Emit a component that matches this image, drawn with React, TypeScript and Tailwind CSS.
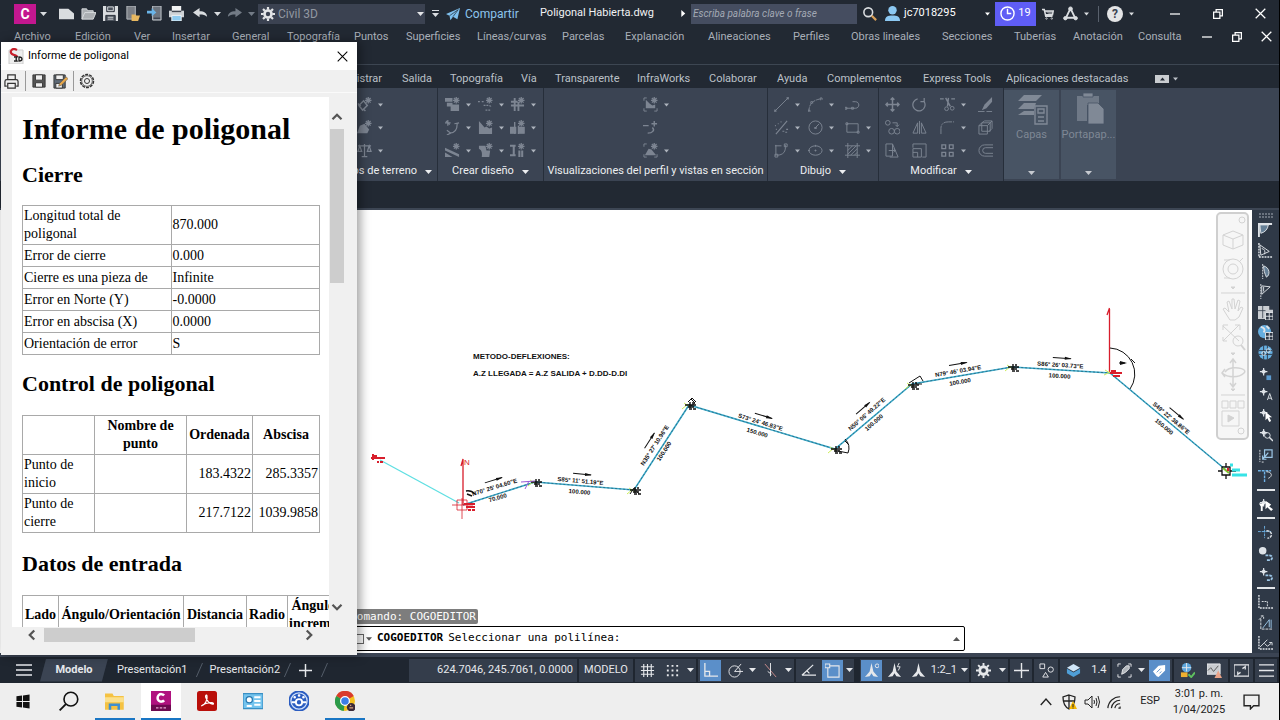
import type { ReactNode } from 'react';

interface IconProps {
  size?: number;
  className?: string;
  children: ReactNode;
}

const Icon = ({ size = 16, className = '', children }: IconProps) => (
  <svg
    width={size}
    height={size}
    viewBox="0 0 16 16"
    fill="none"
    stroke="currentColor"
    strokeWidth="1"
    aria-hidden="true"
    className={`shrink-0 ${className}`}
  >
    {children}
  </svg>
);

const Caret = ({ className = '' }: { className?: string }) => (
  <svg width="7" height="4" viewBox="0 0 7 4" fill="currentColor" aria-hidden="true" className={`shrink-0 ${className}`}>
    <path d="M0 0h7L3.500 4z" />
  </svg>
);

const star = <path d="M12 0v7M8.500 3.500h7M9.500 1l5 5M14.500 1l-5 5" strokeWidth="1.400" />;

/* ---------- title bar ---------- */

const quickTools: { label: string; icon: ReactNode }[] = [
  { label: 'Nuevo', icon: <path d="M0 3h10l6 5v6H0z" fill="#d9dcdf" stroke="none" /> },
  {
    label: 'Abrir',
    icon: <path d="M1 14V3h5l1 2h6v2M1 14l3-7h12l-3 7z" fill="#d9dcdf" fillOpacity=".75" stroke="#d9dcdf" />,
  },
  {
    label: 'Guardar',
    icon: (
      <>
        <path d="M0 0h16v16H0z" fill="#d9dcdf" stroke="none" />
        <path d="M4 0v6h8V0M3 16v-6h10v6" fill="#4b525c" stroke="#222933" />
        <path d="M5 1h6v4H5zM5 12h6M5 14h6" stroke="#d9dcdf" />
      </>
    ),
  },
  {
    label: 'Abrir desde web y móvil',
    icon: (
      <>
        <path d="M2 0h9v14H2z" fill="#7b7f86" stroke="#b9bdc2" />
        <path d="M7 9h4l1 1h4l-2 6H7z" fill="#e8b860" stroke="none" />
      </>
    ),
  },
  {
    label: 'Guardar en web y móvil',
    icon: (
      <>
        <path d="M6 0h9v15H6z" fill="#6e757f" stroke="#c5c9ce" />
        <path d="M7 13h7" stroke="#222933" />
        <path d="M0 5h5V2l5 5-5 4V8H0z" fill="#6ab4e8" stroke="none" />
      </>
    ),
  },
  {
    label: 'Trazar',
    icon: (
      <>
        <path d="M3 0h10v5H3z" fill="#f2f3f4" stroke="none" />
        <path d="M0 5h16v7H0z" fill="#cfd3d7" stroke="none" />
        <path d="M3 6h10" stroke="#222933" />
        <path d="M3 10h10v6H3z" fill="#8fcbf0" stroke="#f2f3f4" />
      </>
    ),
  },
];

const WindowButtons = ({ small = false }: { small?: boolean }) => (
  <div className={`flex items-center justify-between text-white ${small ? 'w-[70px]' : 'w-[96px]'}`}>
    <button aria-label="Minimizar"><Icon size={10}><path d="M0 8h16" strokeWidth="2" /></Icon></button>
    <button aria-label="Restaurar">
      <Icon size={10}><path d="M1 5h10v10H1zM5 4V1h10v10h-3" strokeWidth="2" /></Icon>
    </button>
    <button aria-label="Cerrar"><Icon size={11}><path d="M1 1l14 14M15 1L1 15" strokeWidth="1.800" /></Icon></button>
  </div>
);

const TitleBar = () => (
  <div className="flex h-[27px] shrink-0 items-center pr-[13px] pl-[14px] text-[#d9dcdf]">
    <button aria-label="Menú de aplicación" className="flex w-[41px] items-center gap-[4px]">
      <span className="flex h-[20px] w-[22px] items-center justify-center bg-[#c3178f] text-sm leading-none font-bold text-white">C</span>
      <Caret />
    </button>
    {quickTools.map((tool) => (
      <button key={tool.label} aria-label={tool.label} className="flex w-[22px] justify-center">
        <Icon size={15}>{tool.icon}</Icon>
      </button>
    ))}
    <button aria-label="Deshacer" className="flex w-[34px] items-center gap-[6px] pl-[6px]">
      <Icon size={15}><path d="M0 7l7-5v3.500c5 0 8 2 8 6-2-2-4-2.500-8-2.500v3z" fill="currentColor" stroke="none" /></Icon>
      <Caret />
    </button>
    <button aria-label="Rehacer" className="flex w-[37px] items-center gap-[6px] pl-[6px] text-[#737b86]">
      <Icon size={15}><path d="M16 7L9 2v3.500c-5 0-8 2-8 6 2-2 4-2.500 8-2.500v3z" fill="currentColor" stroke="none" /></Icon>
      <Caret />
    </button>
    <button className="flex h-[20px] w-[167px] items-center gap-[3px] bg-[#3b4251] pr-[1px] pl-[3px] text-xs text-[#9298a1]">
      <Icon size={14} className="text-[#e3e5e7]">
        <circle cx="8" cy="8" r="4" strokeWidth="3" />
        <path d="M8 0v3M8 13v3M0 8h3M13 8h3M2.300 2.300l2 2M11.700 11.700l2 2M13.700 2.300l-2 2M2.300 13.700l2-2" strokeWidth="2.500" />
      </Icon>
      Civil 3D
      <Caret className="ml-auto text-[#e3e5e7]" />
    </button>
    <button aria-label="Personalizar" className="flex w-[21px] flex-col items-center gap-[2px]">
      <span className="h-px w-[7px] bg-current" />
      <Caret />
    </button>
    <button className="flex w-[94px] items-center gap-[5px] text-xs text-[#8cc4ec]">
      <Icon size={14}><path d="M0 8L16 1l-3 13-5-3-3 4-1-5z" fill="#7fc0ee" stroke="none" /><path d="M4 10l10-7-6 8" stroke="#222933" strokeWidth=".8" /></Icon>
      Compartir
    </button>
    <span className="w-[140px] text-[11px] whitespace-nowrap text-[#f1f2f3]">Poligonal Habierta.dwg</span>
    <Icon size={7} className="mr-[4px] text-white"><path d="M3 0l9 8-9 8z" fill="currentColor" stroke="none" /></Icon>
    <input
      aria-label="Buscar"
      placeholder="Escriba palabra clave o frase"
      className="h-[20px] min-w-[100px] flex-1 bg-[#454d60] px-[2px] text-[10px] italic placeholder:text-[#a3a9b4]"
    />
    <button aria-label="Buscar" className="ml-[6px]">
      <Icon size={14}><circle cx="6" cy="6" r="5" strokeWidth="1.800" /><path d="M10 10l5 5" stroke="#d8a05a" strokeWidth="2.500" /></Icon>
    </button>
    <button className="ml-[8px] flex w-[105px] items-center gap-[4px] text-[11px] text-white">
      <Icon size={15} className="text-[#8cc8f2]">
        <circle cx="8" cy="4.500" r="4.500" fill="currentColor" stroke="none" />
        <path d="M0 16c0-5 3-6 8-6s8 1 8 6z" fill="currentColor" stroke="none" />
      </Icon>
      jc7018295
      <Caret className="ml-auto w-[5px]" />
    </button>
    <button className="ml-[5px] flex h-[24px] w-[41px] items-center justify-center gap-[3px] bg-[#5f5df5] text-[11px] text-white">
      <Icon size={15}><circle cx="8" cy="8" r="7" strokeWidth="1.500" /><path d="M8 3v5h4" strokeWidth="1.500" /></Icon>
      19
    </button>
    <button aria-label="Tienda" className="ml-[6px]">
      <Icon size={12}><path d="M0 2h3l2 9h9M4 4h11l-1 5H5" strokeWidth="2" fill="currentColor" fillOpacity=".5" /><circle cx="6" cy="14" r="1" /><circle cx="13" cy="14" r="1" /></Icon>
    </button>
    <button aria-label="Autodesk" className="ml-[9px] flex items-center gap-[6px]">
      <Icon size={15}><path d="M8 2.500L3 13M8 2.500L13 13M3 12.500h9" strokeWidth="2" /><circle cx="8" cy="3" r="2" fill="currentColor" /><circle cx="2.500" cy="13" r="1.800" fill="currentColor" /><circle cx="13.500" cy="13" r="1.800" fill="currentColor" /></Icon>
      <Caret className="w-[5px]" />
    </button>
    <span className="mr-[8px] ml-[9px] h-[16px] w-px bg-[#59616d]" />
    <button aria-label="Ayuda" className="flex items-center gap-[6px]">
      <span className="flex h-[16px] w-[16px] items-center justify-center rounded-full bg-[#e4e5e6] text-xs font-bold text-[#3b4251]">?</span>
      <Caret className="w-[5px]" />
    </button>
    <div className="ml-[36px]"><WindowButtons /></div>
  </div>
);

/* ---------- menu bar and ribbon tabs ---------- */

const menus = [
  'Archivo', 'Edición', 'Ver', 'Insertar', 'General', 'Topografía', 'Puntos', 'Superficies', 'Líneas/curvas',
  'Parcelas', 'Explanación', 'Alineaciones', 'Perfiles', 'Obras lineales', 'Secciones', 'Tuberías', 'Anotación', 'Consulta',
];

const ribbonTabs = [
  'Administrar', 'Salida', 'Topografía', 'Vía', 'Transparente', 'InfraWorks', 'Colaborar', 'Ayuda',
  'Complementos', 'Express Tools', 'Aplicaciones destacadas',
];

const MenuBar = () => (
  <nav className="flex h-[38px] shrink-0 items-start border-b border-[#3d4652] pr-[7px] pl-[14px] text-[11px] leading-[19px] text-[#a9afb8]">
    <div className="grid flex-1 grid-cols-[61fr_59fr_38fr_60fr_55fr_67fr_52fr_71fr_85fr_63fr_83fr_85fr_58fr_91fr_72fr_59fr_65fr_64fr]">
      {menus.map((menu) => (
        <button key={menu} className="text-left whitespace-nowrap">{menu}</button>
      ))}
    </div>
    <div className="flex h-[19px] items-center"><WindowButtons small /></div>
  </nav>
);

const RibbonTabs = () => (
  <div className="grid h-[23px] shrink-0 grid-cols-[77fr_48fr_71fr_34fr_82fr_72fr_68fr_50fr_96fr_83fr_149fr_124fr] items-center pt-[5px] pl-[325px] text-[11px] leading-[18px] text-[#bcc1c8]">
    {ribbonTabs.map((tab) => (
      <button key={tab} className="text-left whitespace-nowrap">{tab}</button>
    ))}
    <button aria-label="Minimizar cinta" className="flex items-center gap-[4px]">
      <span className="flex h-[8px] w-[14px] items-center justify-center bg-[#c9ccd0] text-[#222933]"><Caret className="w-[5px] rotate-180" /></span>
      <Caret className="w-[5px]" />
    </button>
  </div>
);

/* ---------- ribbon ---------- */

interface Tool {
  name: string;
  icon: ReactNode;
  menu?: boolean;
}

const landTools: Tool[] = [
  { name: 'Parcela', menu: true, icon: <>{star}<path d="M2 9l5-5 4 5-5 5zM1 7l3 3M7 13l2 2" strokeWidth="1.600" /></> },
  { name: 'Superficies', menu: true, icon: <>{star}<path d="M0 14l3-8 5-2 5 6-2 4z" fill="currentColor" stroke="none" /></> },
  { name: 'Explanación', menu: true, icon: <path d="M8 1v13M5 14.500h6M1 3h14M3 3l-2 6h4zM13 3l-2 6h4z" strokeWidth="1.300" /> },
];

const designTools: Tool[] = [
  { name: 'Alineación', menu: true, icon: <>{star}<path d="M0 1h8v4H0zM2 6h6v4H2zM6 8h9v7H6z" fill="currentColor" stroke="none" /></> },
  { name: 'Intersecciones', menu: true, icon: <>{star}<path d="M0 5h2M4 5h3M6 9h5c2 0 3 1 3 2M8 14h6" strokeDasharray="2 1" strokeWidth="1.300" /></> },
  { name: 'Red de tuberías', menu: true, icon: <>{star}<path d="M5 1v14M9 5v10M1 5h7M1 9h14M8 9h7" strokeWidth="2" /></> },
  { name: 'Perfil', menu: true, icon: <path d="M3 0v6M0 3h6M1 1l4 4M5 14c5 0 8-3 8-10M10 4l5-1M2 11l4 3-4 2" strokeWidth="1.300" /> },
  { name: 'Obra lineal', menu: true, icon: <>{star}<path d="M1 1l6 7 2-1 3 2 3-1v7H1z" fill="currentColor" stroke="none" /></> },
  { name: 'Puente', menu: true, icon: <>{star}<path d="M0 8h6v6H0zM9 8h6v6H9zM5 2v13M9 6v9" fill="currentColor" strokeWidth="1.500" /></> },
  { name: 'Ensamblaje', menu: true, icon: <>{star}<path d="M0 5l15 7v3L0 8zM0 10l8 5H0z" fill="currentColor" stroke="none" /></> },
  { name: 'Líneas de muestreo', menu: true, icon: <>{star}<path d="M1 3h7l1 5h4l-1 7H4c1-6-1-8-3-9z" fill="currentColor" stroke="none" /></> },
  { name: 'Red a presión', menu: true, icon: <>{star}<path d="M0 3h6M4 3v9M0 13h6M10 8v7M13 8v7" strokeWidth="2.200" /></> },
];

const corners = <path d="M1 4V1h3M1 12v3h3M12 15h3v-3" />;

const viewTools: Tool[] = [
  { name: 'Visualización del perfil', menu: true, icon: <>{star}{corners}<path d="M3 3v9h10V8l-3 1-3-2z" fill="currentColor" stroke="none" /></> },
  { name: 'Trazado', icon: <path d="M0 6h6M12 1v6M9 4h6M10 8c3 3 0 6-5 6" strokeWidth="1.500" /> },
  { name: 'Vistas en sección', menu: true, icon: <>{star}{corners}<path d="M2 13l4-7 3 1 5 6z" fill="currentColor" stroke="none" /></> },
];

const drawTools: Tool[] = [
  { name: 'Línea', menu: true, icon: <path d="M1 15L15 1M0 14h2v2H0zM14 0h2v2h-2z" /> },
  { name: 'Arco', menu: true, icon: <path d="M1 15c0-7 4-12 13-13M0 14h2v2H0zM3 5h2v2H3zM13 1h2v2h-2z" strokeDasharray="4 1" /> },
  { name: 'Polilínea', icon: <path d="M1 12h10c5 0 5-7 0-7H8M0 11h2v2H0zM7 11h2v2H7z" /> },
  { name: 'Divisiones', menu: true, icon: <path d="M2 15L14 1M1 6h1M4 4h1M9 12h2M13 10h2M12 13h2M2 10h1M7 2h1" strokeWidth="1.200" /> },
  { name: 'Círculo', menu: true, icon: <><circle cx="8" cy="8" r="7" /><path d="M8 8l4-4M7 8h2v1H7z" /></> },
  { name: 'Rectángulo', menu: true, icon: <path d="M2 4h12v9H2zM1 3h2v2H1zM13 12h2v2h-2z" /> },
  { name: 'Curva', menu: true, icon: <path d="M2 2v12M1 3h7M12 2c1 7-2 11-9 11M1 12h3v3H1zM11 1h3v3h-3z" /> },
  { name: 'Elipse', menu: true, icon: <><ellipse cx="8" cy="8" rx="7" ry="5" /><path d="M8 7v2M7 8h2M8 2v2M0 8h2" /></> },
  { name: 'Sombreado', menu: true, icon: <path d="M3 0v16M13 0v16M0 3h16M0 13h16M3 8l5-5M3 12l9-9M6 13l7-7M10 13l3-3" /> },
];

const modifyTools: Tool[] = [
  { name: 'Desplazar', icon: <path d="M8 1v14M1 8h14M6 3l2-2 2 2M6 13l2 2 2-2M3 6L1 8l2 2M13 6l2 2-2 2" strokeWidth="1.600" /> },
  { name: 'Girar', icon: <path d="M6 2a6.500 6.500 0 1 0 7 3M13 1v4H9" strokeWidth="1.300" /> },
  { name: 'Recortar', menu: true, icon: <><path d="M0 2h4M12 2h4M6 1l5 9M9 1L8 10" strokeWidth="1.500" /><circle cx="7" cy="12.500" r="2" /><circle cx="13" cy="12" r="2" /></> },
  { name: 'Borrar', icon: <><path d="M15 0L7 8l-3 6 5-2 6-7z" fill="currentColor" stroke="none" /><path d="M0 15.500h7M9 15.500h6" /></> },
  { name: 'Copiar', icon: <><circle cx="3" cy="3" r="2.500" /><circle cx="7" cy="12" r="3" /><circle cx="13" cy="12" r="3" /><path d="M8 3h5v4M11 5l2 2 2-2" /></> },
  { name: 'Simetría', icon: <path d="M6 3v11H1zM10 3v11h5zM8 1v14" /> },
  { name: 'Empalme', menu: true, icon: <path d="M1 15V9c0-5 3-7 8-7h6" strokeDasharray="9 1 2 1" /> },
  { name: 'Descomponer', icon: <path d="M1 6h9v9H1zM4 3h9v9H4zM1 6l3-3 3-2h8v8l-3 3M10 6l5-5" /> },
  { name: 'Estirar', icon: <path d="M1 1h7v13H1zM8 1l6 14H5M4 8h7M9 6l2 2-2 2" /> },
  { name: 'Escala', icon: <path d="M1 5V1h14v14h-4M1 6h9v9H1zM1 10h5v5" /> },
  { name: 'Matriz', menu: true, icon: <path d="M2 2h4v4H2zM10 2h4v4h-4zM2 10h4v4H2zM10 10h4v4h-4z" strokeWidth="1.400" /> },
  { name: 'Desfase', icon: <path d="M16 2H7a6 6 0 0 0 0 12h9M16 5H8a3 3 0 0 0 0 6h8" /> },
];

const ToolButton = ({ tool }: { tool: Tool }) => (
  <button aria-label={tool.name} className="flex h-[23px] items-center gap-[6px] text-[#7d8592]">
    <Icon size={15}>{tool.icon}</Icon>
    {tool.menu && <Caret className="w-[5px] text-[#aeb4bd]" />}
  </button>
);

interface PanelProps {
  title: string;
  tools: Tool[];
  className: string;
  gridClass: string;
  arrow?: boolean;
}

const RibbonPanel = ({ title, tools, className, gridClass, arrow = true }: PanelProps) => (
  <section className={`flex shrink-0 flex-col border-r border-[#262e3a] pt-[5px] ${className}`}>
    <div className={`grid ${gridClass}`}>
      {tools.map((tool) => <ToolButton key={tool.name} tool={tool} />)}
    </div>
    <button className="flex h-[19px] items-center justify-center gap-[8px] text-[11px] whitespace-nowrap text-[#eceef0]">
      {title}
      {arrow && <Caret />}
    </button>
  </section>
);

const BigButton = ({ label, children }: { label: string; children: ReactNode }) => (
  <button className="mt-[2px] mr-[2px] mb-[2px] flex w-[55px] shrink-0 flex-col items-center bg-[#485464] pt-[3px] pb-[4px] text-[11px] leading-[14px] text-[#7f8895]">
    <Icon size={32} className="text-[#808996]">{children}</Icon>
    <span className="mt-[3px]">{label}</span>
    <Caret className="mt-auto text-[#c6cad0]" />
  </button>
);

const Ribbon = () => (
  <div className="flex h-[93px] shrink-0 bg-[#3b4453]">
    <RibbonPanel title="Crear datos de terreno" tools={landTools} className="w-[438px]" gridClass="grid-cols-1 pl-[357px] [&+button]:justify-end [&+button]:pr-[5px]" />
    <RibbonPanel title="Crear diseño" tools={designTools} className="w-[106px]" gridClass="grid-cols-3 pl-[7px]" />
    <RibbonPanel title="Visualizaciones del perfil y vistas en sección" tools={viewTools} arrow={false} className="w-[224px]" gridClass="grid-cols-1 pl-[99px]" />
    <RibbonPanel title="Dibujo" tools={drawTools} className="w-[111px]" gridClass="grid-cols-[34px_37px_1fr] pl-[6px]" />
    <RibbonPanel title="Modificar" tools={modifyTools} className="w-[125px]" gridClass="grid-cols-[27px_28px_38px_1fr] pl-[6px]" />
    <BigButton label="Capas">
      <path d="M4 1h9l-3 3H1zM4 5h6l-1 3H1zM4 9h5v2H1z" fill="currentColor" stroke="none" />
      <path d="M9.500 6.500h6v9h-6zM11 8h3v2h-3zM11 12h3M11 14h3" fill="#485464" strokeWidth=".7" />
    </BigButton>
    <BigButton label="Portapap...">
      <path d="M2 1.500h11V6H7v8H2z" fill="currentColor" stroke="none" opacity=".7" />
      <path d="M5 0h5v2H5zM7.500 5h5l3 3v7.500h-8z" fill="currentColor" stroke="#485464" strokeWidth=".4" />
    </BigButton>
  </div>
);

/* ---------- drawing ---------- */

interface Leg {
  x: number;
  y: number;
  angle: number;
  bearing: string;
  distance: string;
}

const legs: Leg[] = [
  { x: 496, y: 492, angle: -17, bearing: 'N70° 25\' 04.60"E', distance: '70.000' },
  { x: 580, y: 486, angle: 5, bearing: 'S85° 11\' 51.19"E', distance: '100.000' },
  { x: 659, y: 448, angle: -57, bearing: 'N35° 27\' 10.96"E', distance: '100.000' },
  { x: 759, y: 427, angle: 17, bearing: 'S73° 24\' 46.83"E', distance: '150.000' },
  { x: 870, y: 418, angle: -41, bearing: 'N50° 06\' 49.22"E', distance: '100.000' },
  { x: 959, y: 376, angle: -10, bearing: 'N79° 46\' 03.94"E', distance: '100.000' },
  { x: 1060, y: 370, angle: 4, bearing: 'S86° 26\' 03.73"E', distance: '100.000' },
  { x: 1168, y: 422, angle: 40, bearing: 'S49° 22\' 38.86"E', distance: '150.000' },
];

const vertices = [[535, 482], [634, 490], [689, 405], [835, 449], [912, 385], [1012, 367]];

const Drawing = () => (
  <svg viewBox="0 210 1252 443" preserveAspectRatio="xMinYMin meet" className="block w-full font-[Liberation_Sans,sans-serif]" fill="none">
    <g fill="#111" fontSize="8" fontWeight="bold">
      <text x="473" y="359">METODO-DEFLEXIONES:</text>
      <text x="473" y="376">A.Z LLEGADA = A.Z SALIDA + D.DD-D.DI</text>
    </g>
    <path d="M380 460L459 503" stroke="#5fdfe2" strokeWidth="1.300" />
    <path d="M463 505L535 482L634 490L689 405L835 449L912 384L1012 367L1110 373L1226 470" stroke="#3aa9c8" strokeWidth="1.600" />
    <path d="M463 505L535 482L634 490L689 405L835 449L912 384L1012 367L1110 373L1226 470" stroke="#1c4f68" strokeWidth=".6" strokeDasharray="2 2" />
    {legs.map((leg) => (
      <g key={leg.bearing} transform={`translate(${leg.x} ${leg.y}) rotate(${leg.angle})`} fill="#111" textAnchor="middle" fontWeight="bold">
        <text y="-3" fontSize="6">{leg.bearing}</text>
        <text y="8" fontSize="6">{leg.distance}</text>
        <path d="M-8 -12H10" stroke="#111" />
        <path d="M4 -13.500L11 -12L4 -10.500z" />
      </g>
    ))}
    {vertices.map(([x, y]) => (
      <g key={x} transform={`translate(${x} ${y})`}>
        <path d="M-7 4L-1 -1M-5 -2L1 2" stroke="#cdee5a" />
        <path d="M-4 0H7M-1 2H5M1 -3V3M3 -2H5M0 4H3M4 4H7" stroke="#111" strokeWidth="1.400" />
      </g>
    ))}
    <path d="M525 489l4-8M521 482l14-1" stroke="#9a5ad6" />
    <path d="M688 402l4-4 4 4M691 399l4 4-4 3M845 439q6 6 3 14l-10-2M845 441l4 4M909 383l11-7 3 5M916 384h6M630 494l4-6 5 6" stroke="#111" />
    <path d="M466 491q5-1 9 3M467 494l5 2" stroke="#111" strokeWidth="1.500" />
    <g stroke="#d81e2c">
      <path d="M463 505V460M461 466L463 459L463 466M1109.500 373V309M1107 315L1109.500 308" strokeWidth="1.300" />
      <path d="M457 500h10v10h-10zM452 505h21M462 498v21" strokeWidth=".8" />
      <path d="M464 504h11M466 507h9M468 510h3M472 510h3M371 458h14M373 454v6M377 462h2M380 462h3M374 456h3M1110 373h12M1111 371h5M1113 376h7" strokeWidth="2" />
    </g>
    <text x="464" y="465" fontSize="8" fill="#d81e2c">N</text>
    <path d="M1110 348A26 26 0 0 1 1130 389M1119 363h6M1131 359l4 4" stroke="#111" />
    <path d="M1120 361l7 2-7 2z" fill="#111" />
    <path d="M1104 375l6-3M1105 370l5 3" stroke="#cdee5a" />
    <path d="M1222 467h8v8h-8zM1218 471h4M1230 471h6M1226 463v4M1226 475v4" stroke="#111" strokeWidth="1.300" />
    <path d="M1223 468l6 5" stroke="#7fc02e" strokeWidth="2" />
    <path d="M1228 468v3" stroke="#d81e2c" strokeWidth="2" />
    <path d="M1230 465h3M1232 470h8M1232 475h15" stroke="#37e3e6" strokeWidth="3" />
  </svg>
);

const NavigationBar = () => (
  <div className="absolute top-[2px] right-[3px] flex h-[228px] w-[33px] flex-col items-center rounded-[5px] border-2 border-[#cfcfcf] bg-[#f6f6f6] pt-[14px] text-[#d3d3d3]">
    <svg width="26" height="206" viewBox="0 0 26 206" fill="none" stroke="currentColor" className="overflow-visible" aria-hidden="true">
      <circle cx="22" cy="-8" r="3" />
      <path d="M3 7l10-4 10 4v10l-10 4-10-4zM3 7l10 4 10-4M13 11v10" />
      <circle cx="13" cy="41" r="10" /><circle cx="13" cy="41" r="5" /><path d="M4 32h6M4 50h6M20 33l3-3" />
      <path d="M11 59h4l-2 2zM11 125h4l-2 2zM11 161h4l-2 2z" fill="currentColor" />
      <path d="M1 65h24M1 167h24" />
      <path d="M8 89l-5-8 2-1 4 4-2-10 2-1 3 8v-10h2l1 10 3-9 2 1-2 10 3-4 2 1-4 9-4 3h-5z" />
      <path d="M3 98l16 15M19 97L3 113M3 102v-5h5M15 97h5v5M3 109v4h4" />
      <circle cx="18" cy="113" r="5" /><path d="M21 117l4 5" strokeWidth="2" />
      <path d="M13 132v26M10 135l3-4 3 4M10 155l3 4 3-4M5 141l-3 4 3 4M2 145c6 5 17 5 22 0s-14-8-19-1" strokeWidth="1.500" />
      <path d="M2 173h6v7H2zM10 173h6v7h-6zM18 173h6v7h-6zM2 183h17v15H2z" />
      <path d="M8 187l6 3-6 4z" fill="currentColor" />
      <circle cx="21" cy="203" r="3" />
    </svg>
  </div>
);

const node = <path d="M6 2v8M2 6h8M6 4l2 2-2 2-2-2z" strokeWidth="1.300" />;
const separator = null;

const sideTools: (ReactNode | null)[] = [
  <><path d="M1 15V1h14" strokeWidth="2" /><path d="M2 2h9q-1 7-8 9z" fill="#9cc6e6" fillOpacity=".5" /></>,
  <><path d="M1 0v15h15" strokeDasharray="2 1" strokeWidth="1.500" /><path d="M2 2l10 7-9 4zM4 6c3 0 4 3 3 6" /></>,
  <><path d="M5 0v16" strokeDasharray="2 1" /><path d="M6 2c7 2 7 10 3 12-2-4-3-8-3-12z" fill="#9cc6e6" fillOpacity=".5" /></>,
  <><path d="M3 0v16" strokeDasharray="2 1" /><path d="M4 2l9 1-9 8zM6 3v5" /></>,
  <><path d="M0 1h12v4h4v4H8v6H0z" fill="#c9cdd2" stroke="none" /><path d="M5 1v13M0 6h8" stroke="#2f3947" strokeWidth=".8" /><path d="M8 8h8v8H8zM8 12h8M12 8v8" fill="#2f3947" /></>,
  <><circle cx="7" cy="7" r="7" fill="#65aee0" stroke="none" /><path d="M3 2c4 1 5 3 3 6M9 1l3 3" strokeWidth="2" /><path d="M8 8h8v8H8zM8 12h8M12 8v8" fill="#2f3947" /></>,
  <><circle cx="8" cy="8" r="7.500" fill="#65aee0" stroke="none" /><path d="M1 6h14M1 10h14M6 1v14M10 1v14" stroke="#2f3947" /><circle cx="6" cy="9" r="2" /><circle cx="11" cy="6" r="2" /></>,
  <>{node}<path d="M9 10h5v5H9z" fill="#5b9bd0" stroke="none" /></>,
  <>{node}<path d="M10 15l2.500-7 2.500 7M11 13h3" /></>,
  <>{node}<path d="M8 5v9l2-2 2 4 2-1-2-4h3z" fill="#fff" stroke="none" /></>,
  <>{node}<circle cx="10" cy="9" r="3" /><path d="M12 11l4 4" strokeWidth="1.500" /></>,
  <><path d="M2 2v13M4 15h3" strokeDasharray="2 1" /><path d="M7 2h8v8H7zM11 5L5 12M5 8v4h4" stroke="#9cc6e6" strokeWidth="1.300" /></>,
  <><path d="M0 3h14M7 4v11" stroke="#6fb2e6" strokeWidth="1.500" strokeDasharray="3 1" /><path d="M9 4c6 0 7 5 2 7" /></>,
  separator,
  <>{node}<path d="M1 7h6l-2 3v5H3v-5zM8 4v9l2-2 4 4 2-2-4-3 2-2z" fill="#fff" stroke="none" /></>,
  separator,
  <><path d="M0 7h14M7 1v13" stroke="#6fb2e6" strokeDasharray="3 1" /><path d="M9 6c7 0 7 8 1 8" strokeWidth="1.500" strokeDasharray="3 1" /></>,
  <><circle cx="5" cy="5" r="4" fill="currentColor" stroke="none" /><path d="M8 10h4c4 0 4 5 0 5H9" stroke="#9cc6e6" strokeWidth="2" strokeDasharray="3 1" /></>,
  <>{node}<path d="M8 10h4c4 0 4 5 0 5H9" stroke="#9cc6e6" strokeWidth="2" strokeDasharray="3 1" /></>,
  separator,
  <><path d="M1 1v14h15" strokeDasharray="2 1" strokeWidth="1.500" /><path d="M4 8h6v5" strokeDasharray="2 1" /></>,
  <><path d="M1 5l4-4M3 1h3v3M3 4v11h12" strokeDasharray="3 1" /><path d="M5 14l7-9v8M14 5v9" stroke="#9cc6e6" /></>,
  <><path d="M1 1v14h15" strokeDasharray="2 1" strokeWidth="1.500" /><path d="M2 13l8-8M7 9l3 3 4-3M12 8h3v3" /></>,
];

const SideToolbar = () => (
  <div className="flex w-[27px] shrink-0 flex-col items-center bg-[#2f3947] pt-[3px] text-[#dfe3e8]">
    <svg width="14" height="5" viewBox="0 0 14 5" stroke="#a4abb5" strokeDasharray="2 1" className="mb-[2px] shrink-0" aria-hidden="true">
      <path d="M0 1h14M0 4h14" />
    </svg>
    {sideTools.map((icon, i) =>
      icon === null ? (
        <span key={i} className="flex h-[8px] w-[18px] items-center"><span className="h-[2px] w-full bg-[#e4e7ea]" /></span>
      ) : (
        <button key={i} aria-label={`Herramienta ${i + 1}`} className="flex min-h-0 flex-1 items-center">
          <Icon size={15}>{icon}</Icon>
        </button>
      ),
    )}
  </div>
);

const CommandLine = () => (
  <div className="absolute bottom-[2px] left-0 w-[965px] max-w-full font-[DejaVu_Sans_Mono,monospace] text-[11px]">
    <p className="ml-[341px] w-[137px] rounded-r-[2px] bg-[#7d7d7d] pr-[2px] text-right leading-[15px] whitespace-nowrap text-white">Comando: COGOEDITOR</p>
    <div className="mt-[2px] ml-[341px] flex h-[25px] items-center rounded-[2px] border border-black bg-white pr-[4px] pl-[12px] text-black">
      <span className="h-[10px] w-[10px] border border-[#666]" />
      <Caret className="mr-[5px] ml-[2px] w-[6px] text-[#555]" />
      <label htmlFor="command" className="font-bold">COGOEDITOR</label>
      <input id="command" defaultValue="Seleccionar una polilínea:" className="ml-[5px] min-w-0 flex-1 outline-none" />
      <button aria-label="Historial"><Caret className="rotate-180 text-[#555]" /></button>
    </div>
  </div>
);

/* ---------- report window ---------- */

const closure = [
  ['Longitud total de poligonal', '870.000'],
  ['Error de cierre', '0.000'],
  ['Cierre es una pieza de', 'Infinite'],
  ['Error en Norte (Y)', '-0.0000'],
  ['Error en abscisa (X)', '0.0000'],
  ['Orientación de error', 'S'],
];

const control = [
  ['Punto de inicio', '', '183.4322', '285.3357'],
  ['Punto de cierre', '', '217.7122', '1039.9858'],
];

const cell = 'border border-[#a9a9a9] px-[1px] py-[1px]';

const Report = () => (
  <div className="h-full w-[317px] overflow-hidden bg-white pl-[10px] font-[Liberation_Serif,serif] text-[14px] leading-[18px] text-black">
    <h1 className="mt-[14px] text-[30px] leading-[36px] font-bold">Informe de poligonal</h1>
    <h2 className="mt-[15px] text-[22px] leading-[26px] font-bold">Cierre</h2>
    <table className="mt-[17px] w-[298px] table-fixed border-collapse">
      <tbody>
        {closure.map(([name, value]) => (
          <tr key={name} className="h-[22px]">
            <td className={cell}><span className="block pr-[18px]">{name}</span></td>
            <td className={cell}>{value}</td>
          </tr>
        ))}
      </tbody>
    </table>
    <h2 className="mt-[16px] text-[22px] leading-[26px] font-bold">Control de poligonal</h2>
    <table className="mt-[18px] w-[298px] table-fixed border-collapse">
      <thead>
        <tr>
          <th className={`${cell} w-[72px]`} />
          <th className={cell}>Nombre de punto</th>
          <th className={`${cell} w-[66px]`}>Ordenada</th>
          <th className={`${cell} w-[67px]`}>Abscisa</th>
        </tr>
      </thead>
      <tbody>
        {control.map((row) => (
          <tr key={row[0]}>
            <td className={cell}><span className="block pr-[15px]">{row[0]}</span></td>
            <td className={cell}>{row[1]}</td>
            <td className={`${cell} text-right`}>{row[2]}</td>
            <td className={`${cell} text-right`}>{row[3]}</td>
          </tr>
        ))}
      </tbody>
    </table>
    <h2 className="mt-[18px] text-[22px] leading-[26px] font-bold">Datos de entrada</h2>
    <table className="mt-[18px] w-[335px] table-fixed border-collapse">
      <thead>
        <tr>
          <th className={`${cell} w-[36px]`}>Lado</th>
          <th className={`${cell} w-[125px]`}>Ángulo/Orientación</th>
          <th className={`${cell} w-[63px]`}>Distancia</th>
          <th className={`${cell} w-[41px]`}>Radio</th>
          <th className={cell}>Ángulo de incremento</th>
        </tr>
      </thead>
    </table>
  </div>
);

const Chevron = ({ className = '' }: { className?: string }) => (
  <Icon size={12} className={`text-[#555] ${className}`}><path d="M2 11l6-6 6 6" strokeWidth="3" /></Icon>
);

const ReportWindow = () => (
  <div className="absolute top-[42px] left-[1px] flex h-[613px] w-[356px] flex-col bg-[#f0f0f0] text-black shadow-[3px_0_10px_rgba(0,0,0,0.4)]">
    <div className="flex h-[28px] shrink-0 items-center bg-white pr-[9px] pl-[7px]">
      <Icon size={16}>
        <path d="M1 2h14v14H1z" fill="#eee" stroke="#ccc" />
        <path d="M9 2C4-1 1 4 4 6s5 1 5 3" stroke="#c8202c" strokeWidth="2.200" />
        <path d="M6 9h3l-1 2 1 2H6M11 9v4c4 0 4-4 0-4z" stroke="#222" strokeWidth="1.300" />
      </Icon>
      <span className="ml-[4px] text-[11px]">Informe de poligonal</span>
      <button aria-label="Cerrar informe" className="ml-auto"><Icon size={11}><path d="M1 1l14 14M15 1L1 15" strokeWidth="1.500" /></Icon></button>
    </div>
    <div className="flex h-[23px] shrink-0 items-center border-b border-[#fafafa] pl-[3px] text-[#333]">
      <button aria-label="Imprimir"><Icon size={15}><path d="M4 6V1h8v5M3 13H1V8c0-1 1-2 2-2h10c1 0 2 1 2 2v5h-2M4 10h8v5H4z" strokeWidth="1.300" /></Icon></button>
      <span className="mx-[6px] h-[20px] w-px bg-[#999]" />
      <button aria-label="Guardar informe"><Icon size={14}><path d="M1 1h14v14H1z" fill="#555" /><path d="M4 1h8v6H4zM4 10h8v5H4z" fill="#f0f0f0" /></Icon></button>
      <button aria-label="Guardar como" className="ml-[7px]">
        <Icon size={15}><path d="M1 1h12v14H1z" fill="#5f6b78" /><path d="M3 1h8v5H3zM3 10h7v5H3z" fill="#f0f0f0" /><path d="M7 10l7-7 2 2-7 7-3 1z" fill="#e8a84a" stroke="#555" strokeWidth=".6" /></Icon>
      </button>
      <span className="mx-[5px] h-[20px] w-px bg-[#999]" />
      <button aria-label="Configuración">
        <Icon size={16}><circle cx="8" cy="8" r="2.500" /><circle cx="8" cy="8" r="6.500" strokeWidth="1.500" strokeDasharray="3 1" /><circle cx="8" cy="8" r="5.300" strokeWidth=".7" /></Icon>
      </button>
    </div>
    <div className="mt-[4px] flex h-[530px] shrink-0 pl-[11px]">
      <Report />
      <div className="flex w-[15px] flex-col items-center py-[14px]">
        <Chevron />
        <span className="mt-[6px] h-[154px] w-[14px] bg-[#cdcdcd]" />
        <Chevron className="mt-auto rotate-180" />
      </div>
    </div>
    <div className="flex h-[15px] shrink-0 items-center pl-[25px]">
      <Chevron className="-rotate-90" />
      <span className="ml-[6px] h-[14px] w-[151px] bg-[#cdcdcd]" />
      <Chevron className="ml-[108px] rotate-90" />
    </div>
  </div>
);

/* ---------- status bar ---------- */

const Group = ({ children, className = '' }: { children: ReactNode; className?: string }) => (
  <div className={`mr-[2px] flex h-[23px] shrink-0 items-center justify-around bg-[#343d4b] ${className}`}>{children}</div>
);

const StatusTool = ({ label, active, children }: { label: string; active?: boolean; children: ReactNode }) => (
  <button aria-label={label} className={`flex h-[21px] w-[21px] items-center justify-center ${active ? 'bg-[#5b8fc9]' : ''}`}>
    <Icon size={15}>{children}</Icon>
  </button>
);

const person = <path d="M8 0l2 9 5 6-5-1-2-3-2 3-5 1 5-6z" fill="currentColor" stroke="none" />;

const Slash = () => <Icon size={14} className="text-[#5a6370]"><path d="M12 0L5 16" /></Icon>;

const StatusBar = () => (
  <footer className="flex h-[30px] shrink-0 items-center border-t-4 border-[#3b4453] bg-[#1f2630] text-[11px] text-[#e6e8eb]">
    <button aria-label="Menú de presentaciones" className="ml-[16px]"><Icon size={16}><path d="M0 3h16M0 8h16M0 13h16" strokeWidth="1.500" /></Icon></button>
    <button className="ml-[8px] h-[23px] w-[68px] bg-[#3b4453] font-bold [clip-path:polygon(9%_0,100%_0,91%_100%,0_100%)]">Modelo</button>
    <button className="ml-[9px]">Presentación1</button>
    <span className="mx-[4px]"><Slash /></span>
    <button>Presentación2</button>
    <Slash />
    <button aria-label="Nueva presentación" className="mx-[5px]"><Icon size={13}><path d="M8 0v16M0 8h16" strokeWidth="1.800" /></Icon></button>
    <Slash />

    <div className="ml-auto flex shrink-0 items-center">
      <Group className="w-[168px]"><span className="ml-auto pr-[4px]">624.7046, 245.7061, 0.0000</span></Group>
      <Group className="w-[54px]"><button>MODELO</button></Group>
      <Group className="w-[61px]">
        <StatusTool label="Rejilla"><path d="M4 1v14M8 1v14M12 1v14M1 4h14M1 8h14M1 12h14" strokeWidth="1.200" /></StatusTool>
        <StatusTool label="Forzcursor"><path d="M2 3h13M2 8h13M2 13h13" strokeWidth="2" strokeDasharray="2 3" /></StatusTool>
        <Caret />
      </Group>
      <Group className="w-[96px]">
        <StatusTool label="Orto" active><path d="M2 0v14h14M2 9h5v5" strokeWidth="1.400" /></StatusTool>
        <StatusTool label="Rastreo polar"><circle cx="7" cy="9" r="6" /><path d="M7 9h9M7 9l7-8" /></StatusTool>
        <Caret />
        <StatusTool label="Dibujo isométrico"><path d="M2 1l12 14" stroke="#cf8d8d" /><path d="M8 0v14M5 9l4 3" /></StatusTool>
        <Caret />
      </Group>
      <Group className="mr-0 w-[58px]">
        <StatusTool label="Rastreo de objetos"><path d="M1 13h15M1 13L13 2M6 8l3 3" strokeWidth="1.300" /></StatusTool>
        <StatusTool label="Referencia a objetos" active><path d="M5 3h10v12H3V5M0 1h5v4H0z" strokeWidth="1.200" /></StatusTool>
        <Caret />
      </Group>
      <Group className="ml-[4px] w-[109px]">
        <StatusTool label="Visibilidad de anotación" active>{person}<circle cx="14" cy="3" r="2" /></StatusTool>
        <StatusTool label="Escala automática">{person}<path d="M13 0l-2 4h3l-2 4" /></StatusTool>
        <StatusTool label="Escala de anotación">{person}</StatusTool>
        <button className="flex items-center gap-[4px]">1:2_1<Caret /></button>
      </Group>
      <Group className="w-[37px]">
        <StatusTool label="Espacio de trabajo">
          <circle cx="8" cy="8" r="4" strokeWidth="3" /><path d="M8 0v3M8 13v3M0 8h3M13 8h3M2.300 2.300l2 2M11.700 11.700l2 2M13.700 2.300l-2 2M2.300 13.700l2-2" strokeWidth="2" />
        </StatusTool>
        <Caret />
      </Group>
      <Group className="w-[22px]"><StatusTool label="Monitor"><path d="M8 0v16M0 8h16" strokeWidth="1.500" /></StatusTool></Group>
      <Group className="w-[24px]"><StatusTool label="Unidades"><path d="M1 1h5v5H1zM7 10l3 5H4z" /><circle cx="12.500" cy="7" r="2.800" /></StatusTool></Group>
      <Group className="w-[50px]">
        <StatusTool label="Elevación"><path d="M8 1l7 4-7 4-7-4z" fill="#cfe6f8" stroke="none" /><path d="M1 6l7 4 7-4v5l-7 4-7-4z" fill="#4f9fd8" stroke="none" /></StatusTool>
        <span>1.4</span>
      </Group>
      <Group className="w-[60px]">
        <StatusTool label="Aislar objetos"><path d="M1 4V1h3M12 1h3v3M1 12v3h3M12 15h3v-3" /><path d="M5 12l1-5 4-4h3v3l-4 4z" fill="currentColor" fillOpacity=".7" /></StatusTool>
        <Caret />
        <StatusTool label="Etiquetas" active><path d="M1 9l6-6 7-1v6l-7 7-2-1z" fill="#fff" stroke="none" /><path d="M5 10l4-4M8 11l2-2" stroke="#5b8fc9" /></StatusTool>
      </Group>
      <Group className="w-[54px]">
        <StatusTool label="Georreferencia"><circle cx="7" cy="5" r="5" fill="#5da6dc" stroke="none" /><path d="M7 0v9M2 5h10" /><path d="M1 10h7v5H1z" fill="#f0b030" stroke="none" /><path d="M9 12l3 3 4-5" stroke="#5fc25f" strokeWidth="2" /></StatusTool>
        <StatusTool label="Rendimiento gráfico"><path d="M0 1h14v11H0z" fill="#c9ccd0" /><path d="M1 8l3-3 3 4 5-6" stroke="#555" /><path d="M12 8l4 8H8z" fill="#e9a287" stroke="none" /></StatusTool>
      </Group>
      <Group className="w-[23px]"><StatusTool label="Limpiar pantalla"><path d="M0 2h16v12H0zM9 6l3-2v3M7 10l-3 2V9" strokeWidth="1.300" /></StatusTool></Group>
      <Group className="mr-0 w-[22px]"><StatusTool label="Personalización"><path d="M0 2h16M0 8h16M0 14h16" strokeWidth="1.500" /></StatusTool></Group>
    </div>
  </footer>
);

/* ---------- taskbar ---------- */

interface TaskbarApp {
  name: string;
  state: string;
  icon: ReactNode;
}

const apps: TaskbarApp[] = [
  { name: 'Inicio', state: '', icon: <path d="M1 3l6-1v6H1zM8 2l7-1v7H8zM1 9h6v6l-6-1zM8 9h7v7l-7-1z" fill="#111" stroke="none" transform="translate(2 2) scale(.75)" /> },
  { name: 'Buscar en Windows', state: '', icon: <><circle cx="9.500" cy="6.500" r="5.500" stroke="#111" strokeWidth="1.300" /><path d="M5.500 10.500L0.500 15.500" stroke="#111" strokeWidth="1.500" /></> },
  {
    name: 'Explorador', state: 'border-[#1976c4]',
    icon: <><path d="M0 2h6l1 2h8v11H0z" fill="#f5c242" stroke="none" /><path d="M0 5h15v4H0z" fill="#fbe08c" stroke="none" /><path d="M3 15v-5h9v5h-2v-3H5v3z" fill="#3f8fd0" stroke="none" /></>,
  },
  {
    name: 'Autodesk Civil 3D', state: 'border-[#1976c4] bg-white',
    icon: <><path d="M0 0h16v16H0z" fill="#b0127f" stroke="none" /><path d="M0 11h16v5H0z" fill="#6d0a50" stroke="none" /><path d="M10.500 3.500a3 3 0 1 0 0 4" stroke="#fff" strokeWidth="2" /><path d="M4 13.500h8" stroke="#e5a5cf" strokeDasharray="2 1" /></>,
  },
  {
    name: 'Adobe Acrobat', state: '',
    icon: <><rect width="16" height="16" rx="2" fill="#b90f0a" stroke="none" /><path d="M3.500 12c3-1 5-5 4.500-8-.3-1.500-1.500-.5-1 1 1 3 3 5 5.500 5.500 1 .2 1-1.200-1-1.200-2.500 0-6 1-8 2.700z" stroke="#fff" /></>,
  },
  {
    name: 'Panel de control', state: '',
    icon: <><path d="M0 2h16v12H0z" fill="#74c4ee" stroke="#3a8fc4" /><circle cx="5" cy="7" r="2.500" fill="#fff" stroke="#2878b0" /><path d="M9 5h5M9 8h5M9 11h5M3 12h4" stroke="#fff" strokeWidth="1.500" /></>,
  },
  {
    name: 'Navegador', state: '',
    icon: <><circle cx="8" cy="8" r="8.500" fill="#2a5cc0" stroke="none" /><circle cx="8" cy="8" r="6.500" stroke="#cfe0fa" /><path d="M2 9h3.500M10.500 9H14" stroke="#fff" strokeWidth="1.500" /><path d="M4.500 5h.1M8 3.500h.1M11.500 5h.1" stroke="#fff" strokeWidth="2" strokeLinecap="round" /><circle cx="8" cy="9" r="2.500" fill="#2a5cc0" stroke="#fff" strokeWidth="1.500" /></>,
  },
  {
    name: 'Google Chrome', state: 'border-[#1976c4]',
    icon: (
      <>
        <circle cx="8" cy="8" r="8" fill="#f4c020" stroke="none" />
        <path d="M8 8L1 4a8 8 0 0 1 14 0z" fill="#d93a2c" stroke="none" />
        <path d="M8 8L1 4a8 8 0 0 0 6 12z" fill="#2b9a4a" stroke="none" />
        <circle cx="8" cy="8" r="3.500" fill="#3b7de8" stroke="#fff" />
        <circle cx="13" cy="13" r="3.500" fill="#3c2a38" stroke="none" />
        <path d="M11.500 13.500h3M12 11.500h1" stroke="#d9a27c" />
      </>
    ),
  },
];

const Taskbar = () => (
  <div className="flex h-[37px] shrink-0 items-stretch bg-[#eeeeee] text-[#222]">
    {apps.map((app) => (
      <button key={app.name} aria-label={app.name} className={`mx-[3px] flex w-[40px] items-center justify-center border-b-2 ${app.state || 'border-transparent'}`}>
        <Icon size={20}>{app.icon}</Icon>
      </button>
    ))}
    <div className="ml-auto flex items-center gap-[7px] pr-[19px] text-[11px]">
      <button aria-label="Iconos ocultos"><Icon size={12}><path d="M1 12l7-8 7 8" strokeWidth="1.800" /></Icon></button>
      <button aria-label="Seguridad" className="ml-[2px]"><Icon size={16}><path d="M8 1l6 2c0 6-2 10-6 12C4 13 2 9 2 3zM8 1v14M2 7h12" strokeWidth="1.300" /><path d="M12 7l4 8H8z" fill="#f5b800" stroke="none" /><path d="M12 10v3M12 13.500v1" stroke="#222" /></Icon></button>
      <button aria-label="Volumen"><Icon size={16}><path d="M1 6h3l4-4v12l-4-4H1zM10 6q1 2 0 4M12 4q2 4 0 8M14 2q3 6 0 12" /></Icon></button>
      <button aria-label="Red"><Icon size={14}><path d="M1 15A14 14 0 0 1 15 2M5 15A10 10 0 0 1 15 6M9 15a6 6 0 0 1 6-5M13 15h2v-2" strokeWidth="1.300" /></Icon></button>
      <button aria-label="Idioma" className="ml-[12px]">ESP</button>
      <div className="ml-[5px] w-[54px] text-center leading-[16px] whitespace-nowrap"><p>3:01 p. m.</p><p>1/04/2025</p></div>
      <button aria-label="Notificaciones" className="ml-[10px]"><Icon size={17}><path d="M1 2h14v10h-5l-3 3v-3H1z" strokeWidth="1.300" /></Icon></button>
    </div>
  </div>
);

const App = () => (
  <div className="relative flex min-h-screen flex-col overflow-hidden border-r border-black bg-[#222933] font-[Roboto,sans-serif]">
    <TitleBar />
    <MenuBar />
    <RibbonTabs />
    <Ribbon />
    <div className="h-[29px] shrink-0 border-b-2 border-[#3d4654]" />
    <main className="flex min-h-0 flex-1">
      <div className="relative min-w-0 flex-1 overflow-hidden bg-white">
        <Drawing />
        <NavigationBar />
        <CommandLine />
      </div>
      <SideToolbar />
    </main>
    <StatusBar />
    <Taskbar />
    <ReportWindow />
  </div>
);

export default App;
